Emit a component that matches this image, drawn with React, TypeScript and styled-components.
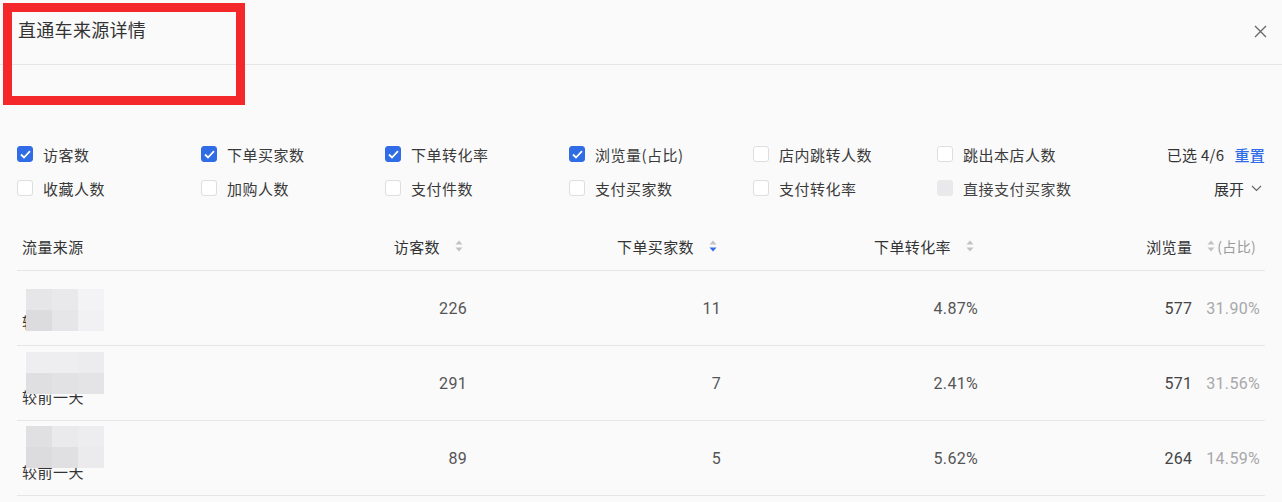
import React from "react";
import styled, { createGlobalStyle } from "styled-components";

const GlobalStyle = createGlobalStyle`
  html, body { margin: 0; padding: 0; background: #fafafb; }
  body { font-family: "Noto Sans CJK SC", "Noto Sans", sans-serif; color: #333; }
  * { box-sizing: border-box; }
`;

const Page = styled.div`
  position: relative;
  width: 1282px;
  height: 502px;
  overflow: hidden;
  background: #fafafb;
`;

const Header = styled.div`
  height: 65px;
  border-bottom: 1px solid #e6e6e8;
  display: flex;
  align-items: center;
  justify-content: space-between;
  padding: 0 14px 6px 18px;
`;

const Title = styled.div`
  font-size: 18px;
  letter-spacing: 0.3px;
  color: #333;
  line-height: 24px;
`;

const CloseButton = styled.button`
  border: 0;
  background: transparent;
  padding: 0;
  width: 16px;
  height: 16px;
  display: flex;
  align-items: center;
  justify-content: center;
  margin-top: 4px;
`;

const Annotation = styled.div`
  position: absolute;
  left: 3px;
  top: 3px;
  width: 242px;
  height: 102px;
  border: 9px solid #f4282b;
  pointer-events: none;
`;

const Filters = styled.div`
  padding: 72px 17px 0 17px;
  display: grid;
  grid-template-columns: repeat(6, 184px) 1fr;
  grid-auto-rows: 34px;
  align-items: center;
`;

const Option = styled.label<{ $disabled?: boolean }>`
  display: flex;
  align-items: center;
  gap: 10px;
  font-size: 15px;
  letter-spacing: 0.5px;
  color: ${(p) => (p.$disabled ? "#444" : "#3a3a3a")};
`;

const Box = styled.span<{ $state: "checked" | "empty" | "disabled" }>`
  width: 16px;
  height: 16px;
  border-radius: 3px;
  flex: none;
  display: flex;
  align-items: center;
  justify-content: center;
  background: ${(p) =>
    p.$state === "checked" ? "#2f6ce6" : p.$state === "disabled" ? "#e9e9eb" : "#fff"};
  border: 1px solid
    ${(p) => (p.$state === "checked" ? "#2f6ce6" : p.$state === "disabled" ? "#e9e9eb" : "#dedee0")};
`;

const RightControl = styled.div`
  justify-self: end;
  display: flex;
  align-items: center;
  gap: 10px;
  font-size: 15px;
  letter-spacing: 0.3px;
  color: #333;
`;

const Count = styled.span`
  font-family: "Noto Sans CJK SC", Roboto, sans-serif;
`;

const LinkText = styled.span`
  color: #2f6ce6;
  font-weight: 500;
`;

const Expand = styled.div`
  justify-self: end;
  display: flex;
  align-items: center;
  gap: 7px;
  font-size: 15px;
  color: #333;
  padding-right: 3px;
`;

const Table = styled.div`
  margin: 17px 17px 0 17px;
`;

const Row = styled.div<{ $head?: boolean }>`
  position: relative;
  display: grid;
  grid-template-columns: 200px 250px 254px 257px 282px;
  height: ${(p) => (p.$head ? "49px" : "75px")};
  border-bottom: 1px solid #e6e6e8;
  align-items: center;
`;

const HeadCell = styled.div<{ $first?: boolean }>`
  display: flex;
  align-items: center;
  justify-content: ${(p) => (p.$first ? "flex-start" : "flex-end")};
  padding: ${(p) => (p.$first ? "0 0 0 5px" : "0 4px 0 0")};
  font-size: 15px;
  letter-spacing: 0.4px;
  color: #333;
  gap: 15px;
`;

const SubLabel = styled.span`
  font-size: 14px;
  color: #9a9a9c;
  margin-left: -13px;
  letter-spacing: 0.3px;
`;

const SourceCell = styled.div`
  padding: 28px 0 0 5px;
  font-size: 15px;
  letter-spacing: 0.5px;
  color: #333;
  line-height: 20px;
`;

const Mosaic = styled.div`
  position: absolute;
  left: 9px;
  display: grid;
  grid-template-columns: repeat(3, 26px);
  grid-auto-rows: 21px;
  &::before {
    content: "";
    position: absolute;
    left: -20px;
    top: 4px;
    width: 30px;
    height: 30px;
    border-radius: 50%;
    background: #efeff1;
    filter: blur(4px);
    z-index: -1;
  }
`;

const Tile = styled.span<{ $c: string }>`
  background: ${(p) => p.$c};
`;

const NumCell = styled.div`
  text-align: right;
  font-family: Roboto, "Liberation Sans", sans-serif;
  font-size: 16px;
  letter-spacing: 0.3px;
  color: #555;
`;

const PairCell = styled.div`
  display: flex;
  justify-content: flex-end;
  align-items: baseline;
  gap: 14px;
  font-family: Roboto, "Liberation Sans", sans-serif;
  font-size: 16px;
  letter-spacing: 0.3px;
`;

const Main = styled.span`
  color: #444;
`;

const Pct = styled.span`
  color: #a8a8aa;
`;

const Check = () => (
  <svg width="11" height="9" viewBox="0 0 11 9">
    <polyline points="1,4.5 4,7.5 10,1.2" fill="none" stroke="#fff" strokeWidth="1.8" />
  </svg>
);

const SortIcon = ({ active }: { active?: boolean }) => (
  <svg width="8" height="12" viewBox="0 0 8 12">
    <polygon points="4,0.5 7.5,4.5 0.5,4.5" fill="#c2c2c4" />
    <polygon points="0.5,7.5 7.5,7.5 4,11.5" fill={active ? "#2f6ce6" : "#c2c2c4"} />
  </svg>
);

type State = "checked" | "empty" | "disabled";
const row1: [string, State][] = [
  ["访客数", "checked"],
  ["下单买家数", "checked"],
  ["下单转化率", "checked"],
  ["浏览量(占比)", "checked"],
  ["店内跳转人数", "empty"],
  ["跳出本店人数", "empty"],
];
const row2: [string, State][] = [
  ["收藏人数", "empty"],
  ["加购人数", "empty"],
  ["支付件数", "empty"],
  ["支付买家数", "empty"],
  ["支付转化率", "empty"],
  ["直接支付买家数", "disabled"],
];

const data = [
  {
    visitors: "226",
    buyers: "11",
    rate: "4.87%",
    views: "577",
    share: "31.90%",
    top: 18,
    tiles: ["#e6e6e8", "#e9e9eb", "#f3f3f5", "#dcdcde", "#e6e6e8", "#f1f1f3"],
  },
  {
    visitors: "291",
    buyers: "7",
    rate: "2.41%",
    views: "571",
    share: "31.56%",
    top: 6,
    tiles: ["#eeeef0", "#eeeef0", "#ececee", "#dfdfe1", "#e2e2e4", "#e4e4e6"],
  },
  {
    visitors: "89",
    buyers: "5",
    rate: "5.62%",
    views: "264",
    share: "14.59%",
    top: 5,
    tiles: ["#e0e0e2", "#eaeaec", "#ededef", "#dcdcde", "#e0e0e2", "#ebebed"],
  },
];

const FilterOption = ({ label, state }: { label: string; state: State }) => (
  <Option $disabled={state === "disabled"}>
    <Box $state={state}>{state === "checked" && <Check />}</Box>
    {label}
  </Option>
);

export default function App() {
  return (
    <Page>
      <GlobalStyle />
      <Header>
        <Title>直通车来源详情</Title>
        <CloseButton aria-label="关闭">
          <svg width="13" height="13" viewBox="0 0 13 13">
            <path d="M1 1 L12 12 M12 1 L1 12" stroke="#6b6b6d" strokeWidth="1.4" />
          </svg>
        </CloseButton>
      </Header>
      <Annotation />
      <Filters>
        {row1.map(([l, s]) => (
          <FilterOption key={l} label={l} state={s} />
        ))}
        <RightControl>
          <Count>已选 4/6</Count>
          <LinkText>重置</LinkText>
        </RightControl>
        {row2.map(([l, s]) => (
          <FilterOption key={l} label={l} state={s} />
        ))}
        <Expand>
          展开
          <svg width="11" height="7" viewBox="0 0 11 7">
            <polyline points="1,1 5.5,5.5 10,1" fill="none" stroke="#666" strokeWidth="1.2" />
          </svg>
        </Expand>
      </Filters>
      <Table>
        <Row $head>
          <HeadCell $first>流量来源</HeadCell>
          <HeadCell>
            访客数 <SortIcon />
          </HeadCell>
          <HeadCell>
            下单买家数 <SortIcon active />
          </HeadCell>
          <HeadCell>
            下单转化率 <SortIcon />
          </HeadCell>
          <HeadCell>
            浏览量 <SortIcon />
            <SubLabel>(占比)</SubLabel>
          </HeadCell>
        </Row>
        {data.map((d, i) => (
          <Row key={i}>
            <SourceCell>较前一天</SourceCell>
            <NumCell>{d.visitors}</NumCell>
            <NumCell>{d.buyers}</NumCell>
            <NumCell>{d.rate}</NumCell>
            <PairCell>
              <Main>{d.views}</Main>
              <Pct>{d.share}</Pct>
            </PairCell>
            <Mosaic style={{ top: d.top }}>
              {d.tiles.map((c, j) => (
                <Tile key={j} $c={c} />
              ))}
            </Mosaic>
          </Row>
        ))}
      </Table>
    </Page>
  );
}
